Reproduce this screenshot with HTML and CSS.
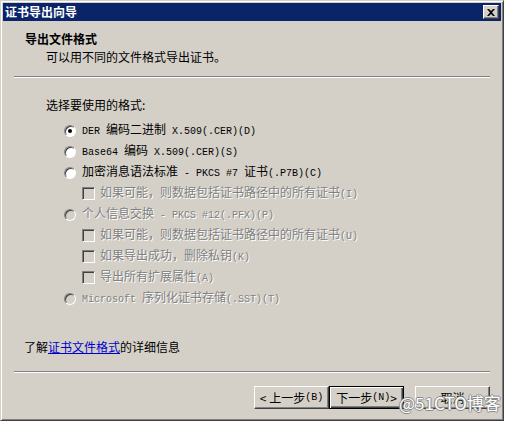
FILE: index.html
```html
<!DOCTYPE html>
<html>
<head>
<meta charset="utf-8">
<link rel="stylesheet" href="styles.css">
</head>
<body>
<div class="dialog">
  <div class="titlebar">
    <span class="title">证书导出向导</span>
    <span class="close"><svg width="8" height="7" viewBox="0 0 8 7"><path d="M0 0h2l2 2 2-2h2L5 3.5 8 7H6L4 5 2 7H0l3-3.5z" fill="#000"/></svg></span>
  </div>
  <div class="header">
    <div class="h-title">导出文件格式</div>
    <div class="h-sub">可以用不同的文件格式导出证书。</div>
  </div>
  <div class="sep"></div>
  <div class="body">
    <div class="label">选择要使用的格式:</div>
    <div class="row radio-row"><span class="radio checked"></span><span class="txt"><span class="lat">DER </span>编码二进制<span class="lat"> X.509(.CER)(D)</span></span></div>
    <div class="row radio-row"><span class="radio"></span><span class="txt"><span class="lat">Base64 </span>编码<span class="lat"> X.509(.CER)(S)</span></span></div>
    <div class="row radio-row"><span class="radio"></span><span class="txt">加密消息语法标准<span class="lat"> - PKCS #7 </span>证书<span class="lat">(.P7B)(C)</span></span></div>
    <div class="row check-row disabled"><span class="check"></span><span class="txt">如果可能，则数据包括证书路径中的所有证书<span class="lat">(I)</span></span></div>
    <div class="row radio-row disabled"><span class="radio"></span><span class="txt">个人信息交换<span class="lat"> - PKCS #12(.PFX)(P)</span></span></div>
    <div class="row check-row disabled"><span class="check"></span><span class="txt">如果可能，则数据包括证书路径中的所有证书<span class="lat">(U)</span></span></div>
    <div class="row check-row disabled"><span class="check"></span><span class="txt">如果导出成功，删除私钥<span class="lat">(K)</span></span></div>
    <div class="row check-row disabled"><span class="check"></span><span class="txt">导出所有扩展属性<span class="lat">(A)</span></span></div>
    <div class="row radio-row disabled"><span class="radio"></span><span class="txt"><span class="lat">Microsoft </span>序列化证书存储<span class="lat">(.SST)(T)</span></span></div>
  </div>
  <div class="more">了解<a class="link" href="#">证书文件格式</a>的详细信息</div>
  <div class="sep sep2"></div>
  <div class="footer">
    <span class="btn">&lt; 上一步<span class="lat">(B)</span></span>
    <span class="btn default">下一步<span class="lat">(N)</span> &gt;</span>
    <span class="btn cancel">取消</span>
  </div>
  <div class="watermark">@51CTO博客</div>
</div>
</body>
</html>
```
FILE: styles.css
```css
html, body {
  margin: 0;
  padding: 0;
  background: #ffffff;
}
body {
  font-family: "Noto Sans CJK SC", "Liberation Sans", sans-serif;
  font-size: 12px;
  color: #000;
}
.dialog {
  position: relative;
  box-sizing: border-box;
  width: 504px;
  height: 421px;
  background: #d4d0c8;
  border: 1px solid;
  border-color: #d4d0c8 #404040 #404040 #d4d0c8;
  box-shadow: inset 1px 1px #ffffff, inset -1px -1px #808080;
  padding: 2px;
  display: flex;
  flex-direction: column;
}
.titlebar {
  height: 18px;
  background: #0a246a;
  display: flex;
  align-items: center;
  justify-content: space-between;
  padding: 0 2px 0 2px;
}
.title {
  color: #fff;
  font-weight: bold;
  font-size: 12px;
  line-height: 18px;
}
.close {
  box-sizing: border-box;
  width: 16px;
  height: 14px;
  background: #d4d0c8;
  border: 1px solid;
  border-color: #ffffff #404040 #404040 #ffffff;
  box-shadow: inset -1px -1px #808080;
  display: flex;
  align-items: center;
  justify-content: center;
}
.header {
  padding-left: 22px;
}
.h-title {
  margin-top: 10px;
  font-weight: bold;
  line-height: 16px;
}
.h-sub {
  margin-top: 2px;
  padding-left: 21px;
  line-height: 16px;
}
.sep {
  margin: 11px 0 0 11px;
  width: 476px;
  height: 1px;
  background: #808080;
  border-bottom: 1px solid #ffffff;
}
.body {
  margin-top: 19px;
  padding-left: 43px;
}
.label {
  line-height: 16px;
  margin-bottom: 7px;
}
.row {
  height: 21px;
  display: flex;
  align-items: center;
  line-height: 16px;
  white-space: nowrap;
}
.radio-row {
  padding-left: 18px;
}
.check-row {
  padding-left: 36px;
}
.lat {
  font-family: "Liberation Mono", monospace;
  font-size: 10px;
}
.radio {
  position: relative;
  box-sizing: border-box;
  width: 12px;
  height: 12px;
  border-radius: 50%;
  background: #ffffff;
  border: 1px solid;
  border-color: #808080 #ffffff #ffffff #808080;
  box-shadow: inset 1px 1px #404040;
  margin-right: 6px;
  flex: none;
}
.radio.checked::after {
  content: "";
  position: absolute;
  left: 3px;
  top: 3px;
  width: 4px;
  height: 4px;
  border-radius: 50%;
  background: #000;
}
.check {
  box-sizing: border-box;
  width: 13px;
  height: 13px;
  background: #d4d0c8;
  border: 1px solid;
  border-color: #808080 #ffffff #ffffff #808080;
  box-shadow: inset 1px 1px #404040;
  margin-right: 5px;
  flex: none;
}
.disabled .radio {
  background: #d4d0c8;
}
.disabled .txt {
  color: #808080;
  text-shadow: 1px 1px 0 #ffffff;
}
.more {
  margin-top: 30px;
  padding-left: 21px;
  line-height: 16px;
}
.link {
  color: #0000cc;
  text-decoration: underline;
}
.sep2 {
  margin-top: 16px;
}
.footer {
  margin-top: 13px;
  display: flex;
  justify-content: flex-end;
  padding-right: 11px;
}
.btn {
  box-sizing: border-box;
  width: 75px;
  height: 23px;
  display: flex;
  align-items: center;
  justify-content: center;
  background: #d4d0c8;
  border: 1px solid;
  border-color: #ffffff #404040 #404040 #ffffff;
  box-shadow: inset -1px -1px #808080;
  white-space: nowrap;
}
.btn.default {
  border: 1px solid #000;
  box-shadow: inset 1px 1px #ffffff, inset -1px -1px #404040, inset -2px -2px #808080;
}
.btn.cancel {
  margin-left: 11px;
}
.watermark {
  position: absolute;
  left: 398px;
  top: 391px;
  font-size: 17px;
  line-height: 22px;
  color: #ffffff;
  text-shadow: 1px 0 0 #8a8a8a, -1px 0 0 #8a8a8a, 0 1px 0 #8a8a8a, 0 -1px 0 #8a8a8a;
  white-space: nowrap;
}
```
